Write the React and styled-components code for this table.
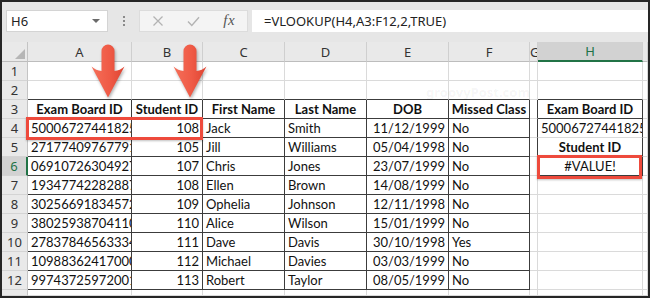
import React from 'react';
import styled, { createGlobalStyle, css } from 'styled-components';

const Global = createGlobalStyle`
  html, body { margin: 0; padding: 0; background: #fff; }
  body { width: 650px; height: 298px; overflow: hidden; }
`;

const UI_FONT = `"Noto Sans", "Open Sans", sans-serif`;
const CELL_FONT = `Lato, "Noto Sans", sans-serif`;
const GRID_LINE = '#dadada';
const DARK_LINE = '#3c3c3c';
const EXCEL_GREEN = '#217346';
const MARK_RED = '#ee4a3c';

const Window = styled.div`
  width: 650px;
  height: 298px;
  box-sizing: border-box;
  border: 2px solid #262626;
  display: flex;
  flex-direction: column;
  overflow: hidden;
  background: #fff;
`;

/* ---------- formula bar ---------- */
const FormulaBar = styled.div`
  height: 40px;
  flex: none;
  box-sizing: border-box;
  background: #e6e6e6;
  display: flex;
  align-items: flex-start;
  padding: 8px 0 0 4px;
`;

const NameBox = styled.div`
  width: 102px;
  height: 22px;
  box-sizing: border-box;
  background: #fff;
  border: 1px solid #d4d4d4;
  display: flex;
  align-items: center;
  justify-content: space-between;
  padding: 0 7px 0 4px;
  font: 13px ${UI_FONT};
  color: #222;
`;

const DropCaret = styled.span`
  width: 0;
  height: 0;
  border-left: 4px solid transparent;
  border-right: 4px solid transparent;
  border-top: 4px solid #6a6a6a;
`;

const Grip = styled.div`
  width: 31px;
  height: 22px;
  display: flex;
  flex-direction: column;
  align-items: center;
  justify-content: center;
  gap: 2px;
`;

const GripDot = styled.span`
  width: 2px;
  height: 2px;
  background: #8a8a8a;
`;

const ButtonStrip = styled.div`
  width: 109px;
  height: 22px;
  box-sizing: border-box;
  background: #f4f4f4;
  border: 1px solid #dcdcdc;
  display: grid;
  grid-template-columns: repeat(3, 1fr);
  align-items: center;
  justify-items: center;
`;

const FxLabel = styled.span`
  font: italic 15px "Liberation Serif", serif;
  color: #555;
  letter-spacing: 0.5px;
  margin-top: -2px;
`;

const FormulaInput = styled.div`
  flex: 1;
  height: 22px;
  margin-left: 4px;
  box-sizing: border-box;
  background: #fff;
  display: flex;
  align-items: center;
  padding-left: 12px;
  font: 13px ${UI_FONT};
  color: #222;
  white-space: nowrap;
`;

/* ---------- sheet grid ---------- */
const Sheet = styled.div`
  position: relative;
  flex: 1;
  display: grid;
  grid-template-columns: 26px 104px 71px 82px 82px 82px 81px 8px 105px 1fr;
  grid-template-rows: 20px repeat(12, 19px) 1fr;
  overflow: hidden;
`;

const Corner = styled.div`
  position: relative;
  background: #e9e9e9;
  border-right: 1px solid #c4c4c4;
  border-bottom: 1px solid #bdbdbd;
  &::after {
    content: '';
    position: absolute;
    right: 2px;
    bottom: 2px;
    border-left: 10px solid transparent;
    border-bottom: 10px solid #b6b6b6;
  }
`;

const ColHead = styled.div`
  box-sizing: border-box;
  background: ${p => (p.$selected ? '#d2d2d2' : '#e9e9e9')};
  color: ${p => (p.$selected ? EXCEL_GREEN : '#333')};
  border-right: 1px solid #cfcfcf;
  border-bottom: ${p => (p.$selected ? `2px solid ${EXCEL_GREEN}` : '1px solid #bdbdbd')};
  font: 13px ${UI_FONT};
  display: flex;
  align-items: center;
  overflow: hidden;
  white-space: nowrap;
  padding-left: ${p => (p.$narrow ? '0' : '0')};
  justify-content: ${p => (p.$narrow ? 'flex-start' : 'center')};
`;

const RowHead = styled.div`
  box-sizing: border-box;
  background: ${p => (p.$selected ? '#d2d2d2' : '#e9e9e9')};
  color: ${p => (p.$selected ? EXCEL_GREEN : '#333')};
  border-right: ${p => (p.$selected ? `2px solid ${EXCEL_GREEN}` : '1px solid #c4c4c4')};
  border-bottom: 1px solid #d4d4d4;
  font: 13px ${UI_FONT};
  display: flex;
  align-items: center;
  justify-content: center;
`;

const Cell = styled.div`
  box-sizing: border-box;
  border-right: 1px solid ${p => (p.$darkRight ? DARK_LINE : GRID_LINE)};
  border-bottom: 1px solid ${p => (p.$darkBottom ? DARK_LINE : GRID_LINE)};
  font: ${p => (p.$bold ? 'bold' : 'normal')} 13px ${CELL_FONT};
  color: #111;
  display: flex;
  align-items: center;
  overflow: hidden;
  white-space: nowrap;
  ${p =>
    p.$align === 'right'
      ? css`justify-content: flex-end; padding: 0 3px 0 0;`
      : p.$align === 'center'
      ? css`justify-content: center;`
      : css`justify-content: flex-start; padding: 0 0 0 3px;`}
`;

const Highlight = styled.div`
  position: absolute;
  box-sizing: border-box;
  border: 3px solid ${MARK_RED};
  box-shadow: 0 1px 2px rgba(0, 0, 0, 0.25);
  pointer-events: none;
`;

const Arrow = styled.svg`
  position: absolute;
  top: 2px;
  filter: drop-shadow(1px 2px 1.5px rgba(0, 0, 0, 0.3));
`;

const Watermark = styled.span`
  position: absolute;
  left: 424px;
  top: 44px;
  font: bold 13px ${UI_FONT};
  line-height: 13px;
  color: rgba(0, 0, 0, 0.05);
`;

const COLS = ['A', 'B', 'C', 'D', 'E', 'F', 'G', 'H', 'I'];

const headers = ['Exam Board ID', 'Student ID', 'First Name', 'Last Name', 'DOB', 'Missed Class'];

const students = [
  ['500067274418257', '108', 'Jack', 'Smith', '11/12/1999', 'No'],
  ['271774097677912', '105', 'Jill', 'Williams', '05/04/1998', 'No'],
  ['069107263049273', '107', 'Chris', 'Jones', '23/07/1999', 'No'],
  ['193477422828871', '108', 'Ellen', 'Brown', '14/08/1999', 'No'],
  ['302566918345723', '109', 'Ophelia', 'Johnson', '12/11/1998', 'No'],
  ['380259387041106', '110', 'Alice', 'Wilson', '15/01/1999', 'No'],
  ['278378465633342', '111', 'Dave', 'Davis', '30/10/1998', 'Yes'],
  ['109883624170005', '112', 'Michael', 'Davies', '03/03/1999', 'No'],
  ['997437259720017', '113', 'Robert', 'Taylor', '08/05/1999', 'No'],
];

const lookup = {
  3: { text: 'Exam Board ID', bold: true, align: 'center' },
  4: { text: '500067274418257', align: 'left' },
  5: { text: 'Student ID', bold: true, align: 'center' },
  6: { text: '#VALUE!', align: 'center' },
};

const tableAlign = ['left', 'right', 'left', 'left', 'right', 'left'];

function cellFor(row, col) {
  const inTable = row >= 3 && row <= 12 && col <= 5;
  const inLookup = row >= 3 && row <= 6 && col === 7;
  let content = { text: '', align: 'left' };
  if (row === 3 && col <= 5) content = { text: headers[col], bold: true, align: 'center' };
  else if (inTable) content = { text: students[row - 4][col], align: tableAlign[col] };
  else if (inLookup) content = lookup[row];

  const darkRight = inTable || inLookup || (row >= 3 && row <= 6 && col === 6);
  const darkBottom =
    inTable ||
    (row === 2 && col <= 5) ||
    (col === 7 && (row === 2 || row === 3 || row === 6));
  return { ...content, darkRight, darkBottom };
}

function ArrowShape({ left, id }) {
  return (
    <Arrow width="38" height="56" viewBox="0 0 38 56" style={{ left }}>
      <defs>
        <linearGradient id={id} x1="0" y1="0" x2="1" y2="0">
          <stop offset="0" stopColor="#f56f59" />
          <stop offset="0.55" stopColor="#ef5a46" />
          <stop offset="1" stopColor="#de4432" />
        </linearGradient>
      </defs>
      <path
        d="M12.5 7 A6.5 6.5 0 0 1 25.5 7 L25.5 27 Q31 26.5 35.5 22.5 Q27 38 19 53.5 Q11 38 2.5 22.5 Q7 26.5 12.5 27 Z"
        fill={`url(#${id})`}
      />
    </Arrow>
  );
}

function CrossIcon() {
  return (
    <svg width="12" height="12" viewBox="0 0 12 12">
      <path d="M1.5 1.5 L10.5 10.5 M10.5 1.5 L1.5 10.5" stroke="#b3b3b3" strokeWidth="1.3" fill="none" />
    </svg>
  );
}

function CheckIcon() {
  return (
    <svg width="13" height="11" viewBox="0 0 13 11">
      <path d="M1 5.5 L4.8 9.5 L12 1.2" stroke="#b3b3b3" strokeWidth="1.4" fill="none" />
    </svg>
  );
}

export default function App() {
  const rows = Array.from({ length: 13 }, (_, i) => i + 1);
  return (
    <>
      <Global />
      <Window>
        <FormulaBar>
          <NameBox>
            H6
            <DropCaret />
          </NameBox>
          <Grip>
            <GripDot />
            <GripDot />
            <GripDot />
          </Grip>
          <ButtonStrip>
            <CrossIcon />
            <CheckIcon />
            <FxLabel>fx</FxLabel>
          </ButtonStrip>
          <FormulaInput>=VLOOKUP(H4,A3:F12,2,TRUE)</FormulaInput>
        </FormulaBar>

        <Sheet>
          <Corner />
          {COLS.map(c => (
            <ColHead key={c} $selected={c === 'H'} $narrow={c === 'G'}>
              {c === 'I' ? '' : c}
            </ColHead>
          ))}
          {rows.map(r => (
            <React.Fragment key={r}>
              <RowHead $selected={r === 6}>{r === 13 ? '' : r}</RowHead>
              {COLS.map((c, ci) => {
                const cell = cellFor(r, ci);
                return (
                  <Cell
                    key={c}
                    $align={cell.align}
                    $bold={cell.bold}
                    $darkRight={cell.darkRight}
                    $darkBottom={cell.darkBottom}
                  >
                    {cell.text}
                  </Cell>
                );
              })}
            </React.Fragment>
          ))}

          <Watermark>groovyPost.com</Watermark>
          <Highlight style={{ left: 24, top: 75, width: 177, height: 23 }} />
          <Highlight style={{ left: 535, top: 113, width: 105, height: 24 }} />
          <ArrowShape left={87} id="arrowA" />
          <ArrowShape left={169} id="arrowB" />
        </Sheet>
      </Window>
    </>
  );
}
